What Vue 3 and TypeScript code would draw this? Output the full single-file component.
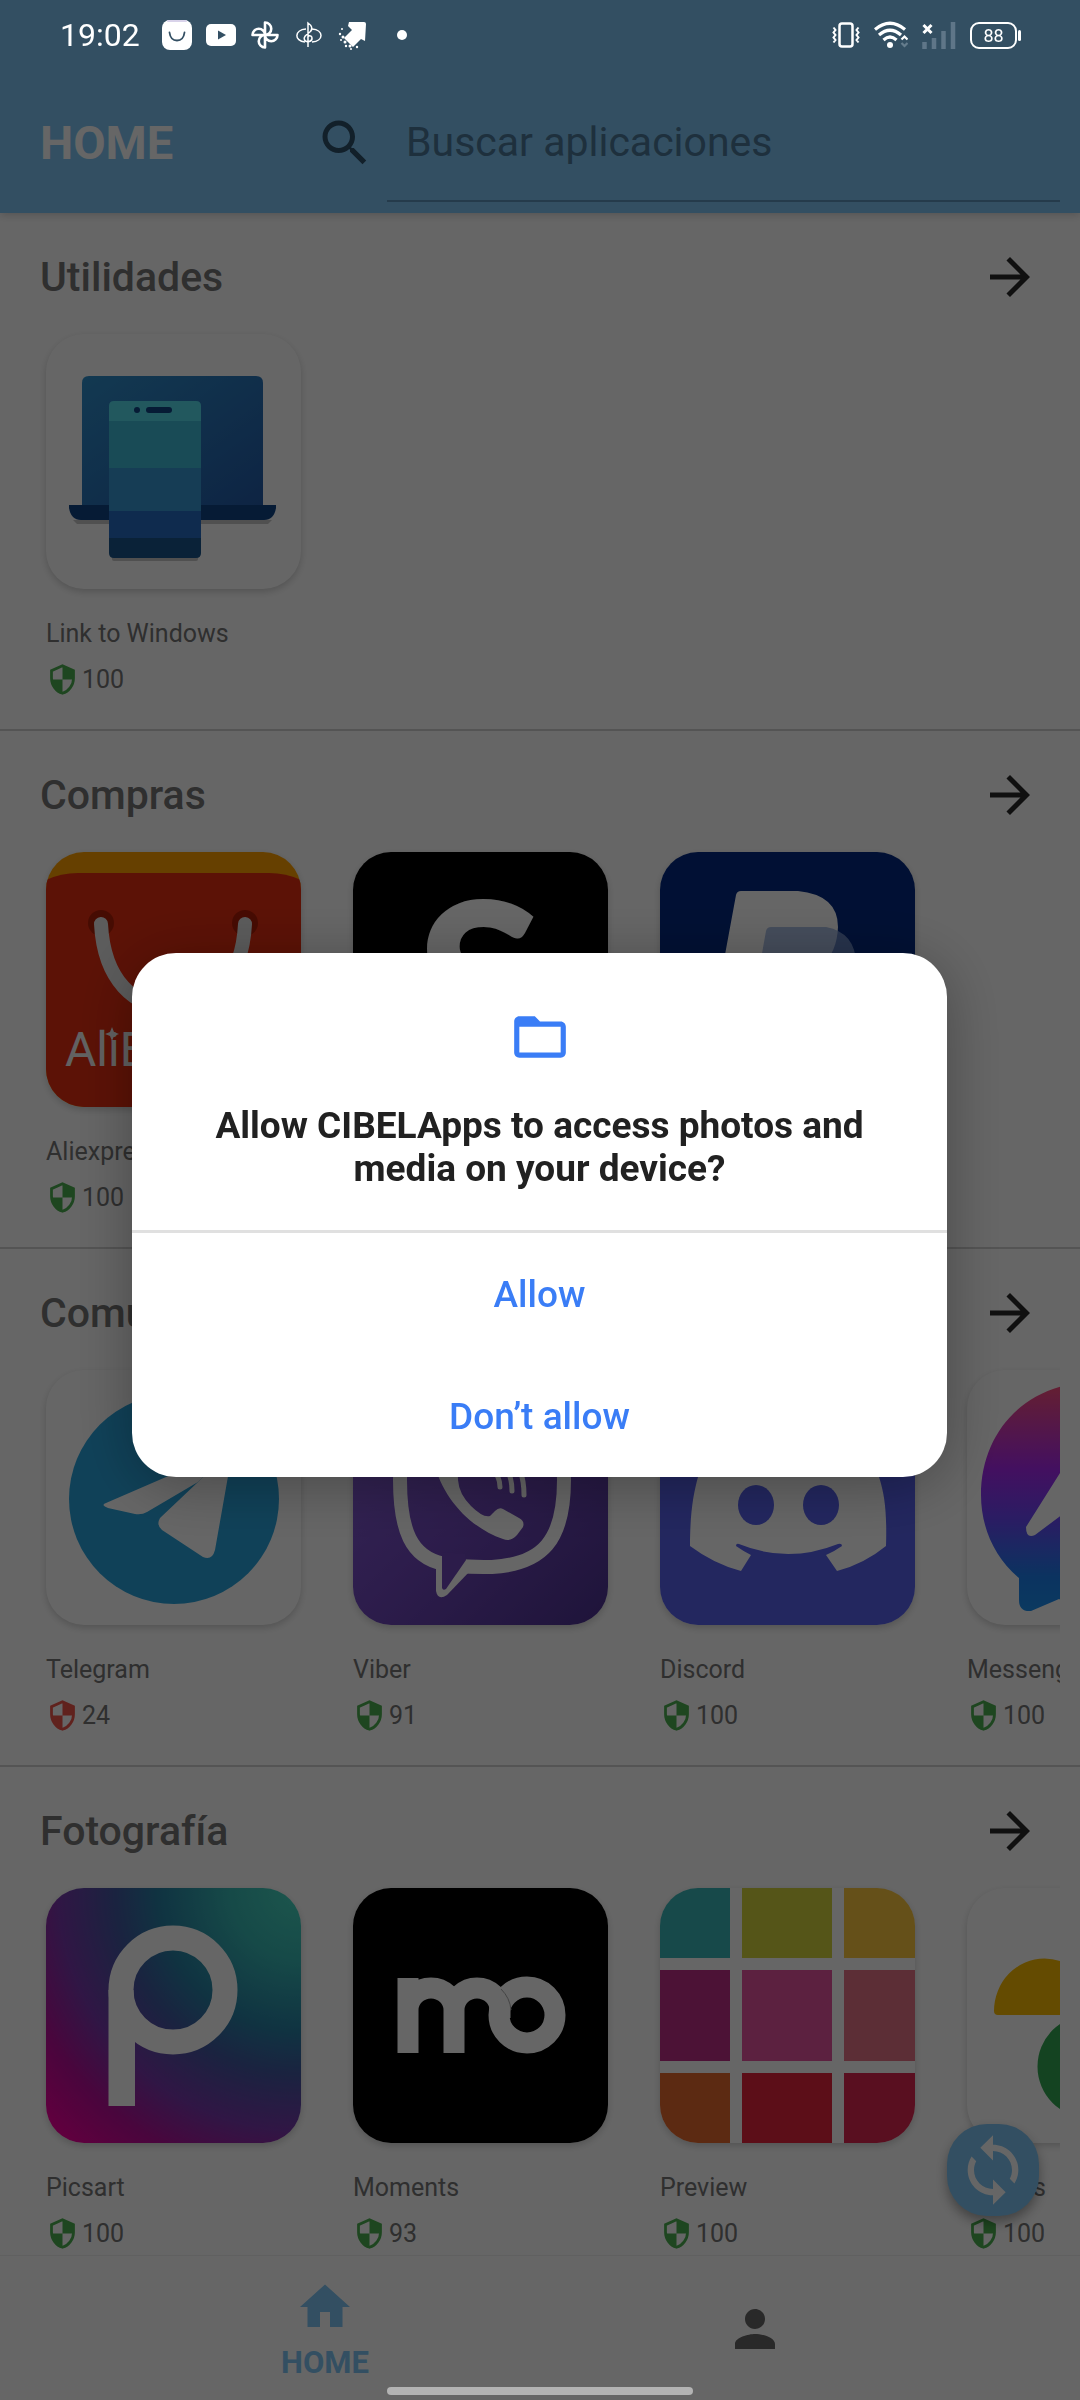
<script setup lang="ts">
import { ref } from 'vue'

type Art =
  | 'link' | 'ali' | 'shein' | 'paypal' | 'telegram' | 'viber'
  | 'discord' | 'messenger' | 'picsart' | 'moments' | 'preview' | 'photos'

interface StoreApp {
  art: Art
  name?: string
  score?: number
}

interface Section {
  title: string
  apps: StoreApp[]
}

const query = ref('')

const sections: Section[] = [
  { title: 'Utilidades', apps: [{ name: 'Link to Windows', score: 100, art: 'link' }] },
  {
    title: 'Compras',
    apps: [
      { name: 'Aliexpress', score: 100, art: 'ali' },
      { art: 'shein' },
      { art: 'paypal' },
    ],
  },
  {
    title: 'Comunicación',
    apps: [
      { name: 'Telegram', score: 24, art: 'telegram' },
      { name: 'Viber', score: 91, art: 'viber' },
      { name: 'Discord', score: 100, art: 'discord' },
      { name: 'Messenger', score: 100, art: 'messenger' },
    ],
  },
  {
    title: 'Fotografía',
    apps: [
      { name: 'Picsart', score: 100, art: 'picsart' },
      { name: 'Moments', score: 93, art: 'moments' },
      { name: 'Preview', score: 100, art: 'preview' },
      { name: 'Photos', score: 100, art: 'photos' },
    ],
  },
]

const tiles = [
  { x: 0, y: 0, w: 70, h: 70, c: '#3ab7b9' },
  { x: 82, y: 0, w: 90, h: 70, c: '#d5d53c' },
  { x: 184, y: 0, w: 71, h: 70, c: '#fcc840' },
  { x: 0, y: 82, w: 70, h: 91, c: '#be2d88' },
  { x: 82, y: 82, w: 90, h: 91, c: '#e653a0' },
  { x: 184, y: 82, w: 71, h: 91, c: '#e67387' },
  { x: 0, y: 185, w: 70, h: 70, c: '#e6692d' },
  { x: 82, y: 185, w: 90, h: 70, c: '#e6233c' },
  { x: 184, y: 185, w: 71, h: 70, c: '#de2650' },
]
</script>

<template>
  <div class="screen">
    <header class="toolbar">
      <h1 class="brand">HOME</h1>
      <label class="search-icon" for="search" aria-label="Buscar">
        <svg viewBox="0 0 24 24" width="60" height="60" fill="#2f5069">
          <path d="M15.5 14h-.79l-.28-.27C15.41 12.59 16 11.11 16 9.5 16 5.91 13.09 3 9.5 3S3 5.91 3 9.5 5.91 16 9.5 16c1.61 0 3.09-.59 4.23-1.57l.27.28v.79l5 4.99L20.49 19l-4.99-5zm-6 0C7.01 14 5 11.99 5 9.5S7.01 5 9.5 5 14 7.01 14 9.5 11.99 14 9.5 14z" />
        </svg>
      </label>
      <input id="search" v-model="query" class="search" type="text" placeholder="Buscar aplicaciones" />
    </header>

    <main class="content">
      <section v-for="s in sections" :key="s.title" class="section">
        <div class="section-head">
          <h2>{{ s.title }}</h2>
          <button type="button" class="more" :aria-label="'Ver más de ' + s.title">
            <svg viewBox="0 0 24 24" width="60" height="60" fill="#2a2a2a">
              <path d="M12 4l-1.41 1.41L16.17 11H4v2h12.17l-5.58 5.59L12 20l8-8z" />
            </svg>
          </button>
        </div>
        <ul class="apps">
          <li v-for="a in s.apps" :key="a.art" class="app">
            <div class="art">
              <svg viewBox="0 0 255 255" width="255" height="255">
                <g v-if="a.art === 'link'">
                  <defs>
                    <linearGradient id="lap" x1="0" y1="0" x2="1" y2="1">
                      <stop offset="0" stop-color="#2f8fcb" />
                      <stop offset="1" stop-color="#235aa8" />
                    </linearGradient>
                  </defs>
                  <path d="M27 186h199l-4 4H31z" fill="#c8c8c8" />
                  <rect x="66" y="222" width="86" height="5" rx="2" fill="#c8c8c8" />
                  <path d="M36 172V49q0-7 7-7h167q7 0 7 7v123z" fill="url(#lap)" />
                  <path d="M23 171h207v3q-2 12-12 12H35q-10 0-12-12z" fill="#0f4486" />
                  <path d="M63 87V72q0-5 5-5h82q5 0 5 5v15z" fill="#55dcec" />
                  <path d="M63 87h92v47H63z" fill="#40bcd6" />
                  <path d="M63 134h92v43H63z" fill="#379ad4" />
                  <path d="M63 177h92v27H63z" fill="#266cc4" />
                  <path d="M63 204h92v15q0 5-5 5H68q-5 0-5-5z" fill="#19558c" />
                  <circle cx="91" cy="76" r="3" fill="#0f4486" />
                  <rect x="100" y="73" width="26" height="6" rx="3" fill="#0f4486" />
                </g>
                <g v-else-if="a.art === 'ali'">
                  <path d="M0 0h255v255H0z" fill="#ffa000" />
                  <path d="M0 28Q15 21 32 21H223Q240 21 255 28V255H0z" fill="#e62e10" />
                  <circle cx="55" cy="71" r="13" fill="#b01e06" />
                  <circle cx="199" cy="71" r="13" fill="#b01e06" />
                  <path d="M55 72C58 128 88 156 127 156S196 128 199 72" fill="none" stroke="#e6e6e6" stroke-width="14" stroke-linecap="round" />
                  <text x="19" y="214" class="ali-text">AliExpress</text>
                  <path d="M66 175l2 5 5 2-5 2-2 5-2-5-5-2 5-2z" fill="#f4f4f4" />
                </g>
                <g v-else-if="a.art === 'shein'">
                  <path d="M0 0h255v255H0z" />
                  <text x="127" y="218" class="shein-text">S</text>
                </g>
                <g v-else-if="a.art === 'paypal'">
                  <path d="M0 0h255v255H0z" fill="#042a82" />
                  <path d="M76 43q1-4 5-4h57q40 4 40 36-2 50-60 54H96l-8 55H50z" fill="#fff" />
                  <path d="M106 79q1-4 5-4h55q32 6 30 42-8 42-62 46h-16l-7 50H82z" fill="#8aa5d8" opacity=".7" />
                </g>
                <g v-else-if="a.art === 'telegram'">
                  <circle cx="128" cy="129" r="105" fill="#2aa4dd" />
                  <path d="M60 133L187 78 152 112 101 142q-5 3-12 2L62 138q-8-3-2-5z" fill="#fff" />
                  <path d="M114 148L152 112 187 78 169 180q-3 11-12 7l-41-27q-6-5-2-12z" fill="#fff" />
                </g>
                <g v-else-if="a.art === 'viber'">
                  <defs>
                    <linearGradient id="vib" x1="0" y1="0" x2="1" y2="1">
                      <stop offset="0" stop-color="#8a62dc" />
                      <stop offset=".5" stop-color="#7048bc" />
                      <stop offset="1" stop-color="#4c3290" />
                    </linearGradient>
                  </defs>
                  <path d="M0 0h255v255H0z" fill="url(#vib)" />
                  <path d="M47 110C47 160 58 187 90 193.500 104 197 120 197 139 197 190 194 211 170 211 110 211 50 190 30 129 30S47 50 47 110z" fill="none" stroke="#fff" stroke-width="14" />
                  <path d="M83 190V221q2 10 11 4L118 200z" fill="#fff" />
                  <path d="M89 182V218q1 3 4 1L113 190 112 184z" fill="#6e46b8" />
                  <path d="M80 90C90 130 118 158 150 169q8 3 14-4l6-8q2-6-4-9l-16-9q-4-2-8 2l-5 5q-7 2-19-10T105 110L104 80z" fill="#fff" />
                  <path d="M138 98q9 8 9 19M142 86q17 12 17 35M146 74q25 16 25 51" fill="none" stroke="#fff" stroke-width="5" stroke-linecap="round" />
                </g>
                <g v-else-if="a.art === 'discord'">
                  <path d="M0 0h255v255H0z" fill="#5862ee" />
                  <path d="M38 107C33 125 30 145 30 176Q54 194 81 201L91 185Q83 181 76 176 76 173 79 174 128 194 178 174 182 173 182 176 175 181 166 185L177 201Q204 194 226 176C227 145 225 125 219 107 212 85 204 65 194 55L62 55C52 65 44 85 38 107z" fill="#fff" />
                  <ellipse cx="96" cy="135" rx="18" ry="20" fill="#5862ee" />
                  <ellipse cx="161" cy="135" rx="18" ry="20" fill="#5862ee" />
                </g>
                <g v-else-if="a.art === 'messenger'">
                  <defs>
                    <linearGradient id="msg" x1="0" y1="0" x2="0" y2="1">
                      <stop offset="0" stop-color="#ff5078" />
                      <stop offset=".38" stop-color="#a828f0" />
                      <stop offset=".6" stop-color="#6a48f8" />
                      <stop offset=".85" stop-color="#1c80f0" />
                      <stop offset="1" stop-color="#1c90f0" />
                    </linearGradient>
                  </defs>
                  <path d="M128 12C60 12 14 61 14 125 14 158 28 188 52 208V230Q52 242 64 241L92 229Q110 238 128 238C195 238 242 190 242 125S195 12 128 12z" fill="url(#msg)" />
                  <path d="M59 157L93 103q8-10 18-3l24 19 40-24q10-4 7 6L148 152q-8 10-18 3L104 138 68 165q-9 4-9-8z" fill="#fff" />
                </g>
                <g v-else-if="a.art === 'picsart'">
                  <defs>
                    <radialGradient id="pic" cx="1" cy="0" r="1.4">
                      <stop offset="0" stop-color="#48d8c0" />
                      <stop offset=".2" stop-color="#38b8b4" />
                      <stop offset=".4" stop-color="#2880a4" />
                      <stop offset=".52" stop-color="#4258a0" />
                      <stop offset=".68" stop-color="#7838ac" />
                      <stop offset=".82" stop-color="#b80e98" />
                      <stop offset=".96" stop-color="#f0009c" />
                    </radialGradient>
                  </defs>
                  <path d="M0 0h255v255H0z" fill="url(#pic)" />
                  <circle cx="127" cy="102" r="52" fill="none" stroke="#fff" stroke-width="25" />
                  <path d="M62.500 102h25l1.500 40v76H62.500z" fill="#fff" />
                </g>
                <g v-else-if="a.art === 'moments'">
                  <path d="M0 0h255v255H0z" />
                  <circle cx="174" cy="127" r="28" fill="none" stroke="#fff" stroke-width="21" />
                  <path d="M55 165V90M55 122A23 22 0 0 1 101 122V165M101 122A23 22 0 0 1 147 122V130" fill="none" stroke="#fff" stroke-width="21" />
                  <path d="M148 101Q157 110 158 122" fill="none" stroke="#aaa" stroke-width="1" />
                </g>
                <g v-else-if="a.art === 'preview'">
                  <rect v-for="t in tiles" :key="t.c" :x="t.x" :y="t.y" :width="t.w" :height="t.h" :fill="t.c" />
                </g>
                <g v-else>
                  <path d="M31 127q-4 0-4-4A50 52 0 0 1 128 123V127z" fill="#fbbc04" />
                  <path d="M127 228q0 4-5 2A50 50 0 0 1 122 127h5z" fill="#34a853" />
                  <path d="M224 130q4 0 4 4A50 52 0 0 1 128 134V130z" fill="#4285f4" />
                  <path d="M128 29q0-4 5-2A50 50 0 0 1 133 127h-5z" fill="#ea4335" />
                </g>
              </svg>
            </div>
            <p v-if="a.name" class="name">{{ a.name }}</p>
            <p v-if="a.score !== undefined" class="score">
              <svg viewBox="0 0 24 24" width="33" height="33" :class="a.score < 50 ? 'bad' : 'good'">
                <path d="M12 2L4 5.600V11c0 5 3.400 9.700 8 11 4.600-1.300 8-6 8-11V5.600z" fill="none" stroke="currentColor" stroke-width="2" />
                <path d="M12 2l8 3.600V12h-8zM12 12v10c-4.600-1.300-7.800-5.600-8-10z" fill="currentColor" />
              </svg>
              <span>{{ a.score }}</span>
            </p>
          </li>
        </ul>
      </section>
      <button type="button" class="fab" aria-label="Actualizar">
        <svg viewBox="0 0 24 24" width="76" height="76" fill="#fff">
          <path d="M12 4V1L8 5l4 4V6c3.310 0 6 2.690 6 6 0 1.010-.25 1.970-.7 2.800l1.460 1.460C19.540 15.030 20 13.570 20 12c0-4.420-3.580-8-8-8zm0 14c-3.310 0-6-2.690-6-6 0-1.010.25-1.970.7-2.800L5.240 7.740C4.460 8.970 4 10.430 4 12c0 4.420 3.580 8 8 8v3l4-4-4-4v3z" />
        </svg>
      </button>
    </main>

    <nav class="tabs">
      <a href="#home" class="tab active">
        <svg viewBox="0 0 24 24" width="60" height="60" fill="currentColor">
          <path d="M10 20v-6h4v6h5v-8h3L12 3 2 12h3v8z" />
        </svg>
        <span>HOME</span>
      </a>
      <a href="#profile" class="tab" aria-label="Perfil">
        <svg viewBox="0 0 24 24" width="60" height="60" fill="currentColor">
          <path d="M12 12c2.210 0 4-1.790 4-4s-1.790-4-4-4-4 1.790-4 4 1.790 4 4 4zm0 2c-2.670 0-8 1.340-8 4v2h16v-2c0-2.660-5.330-4-8-4z" />
        </svg>
      </a>
    </nav>
  </div>

  <div class="scrim">
    <div class="dialog" role="dialog" aria-modal="true" aria-labelledby="ask">
      <div class="ask">
        <svg viewBox="0 0 24 24" width="62" height="62" fill="#3a7df6">
          <path d="M20 6h-8l-2-2H4c-1.100 0-1.990.9-1.990 2L2 18c0 1.100.9 2 2 2h16c1.100 0 2-.9 2-2V8c0-1.100-.9-2-2-2zm0 12H4V8h16v10z" />
        </svg>
        <h2 id="ask">Allow CIBELApps to access photos and media on your device?</h2>
      </div>
      <button type="button" class="choice">Allow</button>
      <button type="button" class="choice">Don’t allow</button>
    </div>
  </div>

  <div class="status">
    <div class="status-left">
      <span class="time">19:02</span>
      <svg viewBox="0 0 30 30" width="30" height="30">
        <rect width="30" height="30" rx="8" fill="#fff" />
        <path d="M6 1h18" stroke="#d9d3ea" stroke-width="2" stroke-linecap="round" />
        <path d="M7.500 12.500q1 8 7.500 8t7.500-8" fill="none" stroke="#334f63" stroke-width="1.800" stroke-linecap="round" />
      </svg>
      <svg viewBox="0 0 30 30" width="30" height="30">
        <rect y="4" width="30" height="22" rx="5" fill="#fff" />
        <path d="M12 10.500v9l8-4.500z" fill="#334f63" />
      </svg>
      <svg viewBox="0 0 30 30" width="30" height="30" fill="none" stroke="#fff" stroke-width="2.600" stroke-linejoin="round">
        <path d="M15 15V2.500a6.200 6.200 0 0 1 0 12.500zM15 15h12.500a6.200 6.200 0 0 1-12.500 0zM15 15v12.500a6.200 6.200 0 0 1 0-12.500zM15 15H2.500a6.200 6.200 0 0 1 12.500 0z" />
      </svg>
      <svg viewBox="0 0 30 30" width="30" height="30" fill="none" stroke="#fff" stroke-width="1.500">
        <path d="M14 27V3q6 4 2.500 8.500C12 15 9 17 10.500 20c2 3 8 1.500 7.500-2s-5-2.500-4 .5" />
        <path d="M12 9C0 10 0 21 11 22M18 9C30 10 30 21 18 22" />
      </svg>
      <svg viewBox="0 0 30 30" width="30" height="30" fill="#fff">
        <path d="M11 2h15q2 0 2 2l-1 17-4-2-8 8-9-9 8-8-4-4z" />
        <g>
          <circle cx="4" cy="9" r="1" /><circle cx="2" cy="14" r="1.200" /><circle cx="5" cy="17" r="1.500" />
          <circle cx="3" cy="20" r="1" /><circle cx="7" cy="22" r="1.500" /><circle cx="8" cy="26" r="1.200" />
          <circle cx="12" cy="26" r="1.500" /><circle cx="13" cy="29" r="1" /><circle cx="19" cy="27" r="1.200" />
        </g>
      </svg>
      <svg class="dot" viewBox="0 0 10 10" width="10" height="10"><circle cx="5" cy="5" r="5" fill="#fff" /></svg>
    </div>
    <div class="status-right">
      <svg viewBox="0 0 28 26" width="28" height="26" fill="none" stroke="#fff">
        <rect x="7.500" y="1.500" width="13" height="23" rx="2.500" stroke-width="2.500" />
        <path d="M1.500 5.500l2 2.500-2 2.500 2 2.500-2 2.500 2 2.500-2 2.500M26.500 5.500l-2 2.500 2 2.500-2 2.500 2 2.500-2 2.500 2 2.500" stroke-width="2" />
      </svg>
      <svg viewBox="0 0 34 28" width="34" height="28" fill="none" stroke="#fff" stroke-width="3.200">
        <path d="M1 8.500Q16 -4 31 8.500M5 14Q16 4.500 27 14M9.500 19Q16 13 22.500 19" />
        <circle cx="16" cy="24" r="3" fill="#fff" stroke="none" />
        <path d="M27.500 18.500l3-3 3 3" stroke-width="2.200" />
        <path d="M27.500 22l3 3 3-3" stroke="#667d8d" stroke-width="2.200" />
      </svg>
      <svg viewBox="0 0 34 28" width="34" height="28">
        <path d="M2.500 28v-7M12 28V17M21.500 28V10M31 28V1" stroke="#5f7688" stroke-width="4.500" />
        <path d="M1.500 4l8 8M9.500 4l-8 8" stroke="#fff" stroke-width="3" />
      </svg>
      <div class="battery"><span>88</span></div>
    </div>
  </div>
  <div class="handle"></div>
</template>

<style>
body {
  background: #fff;
}
</style>

<style scoped>
.screen,
.scrim,
.status {
  font-family: Roboto, 'Liberation Sans', sans-serif;
}
.screen {
  height: 100vh;
  display: flex;
  flex-direction: column;
  overflow: hidden;
  background: #fff;
  color: #757575;
}
svg {
  display: block;
  flex: none;
}
h1,
h2,
p,
ul {
  margin: 0;
  padding: 0;
}
button {
  border: 0;
  padding: 0;
  background: none;
  font: inherit;
  cursor: pointer;
}
.toolbar {
  flex: none;
  display: flex;
  align-items: center;
  height: 141px;
  padding: 72px 20px 0 40px;
  background: #7fc6f5;
  box-shadow: 0 2px 8px rgba(0, 0, 0, 0.18);
  position: relative;
}
.brand {
  width: 275px;
  font-size: 47px;
  font-weight: 700;
  line-height: 56px;
  color: #fff;
}
.search-icon {
  margin-right: 12px;
}
.search {
  flex: 1;
  min-width: 0;
  align-self: stretch;
  margin: 0 0 11px;
  padding: 12px 20px 0 19px;
  border: 0;
  border-bottom: 2px solid #5d94bb;
  border-radius: 0;
  background: none;
  font: 400 41px Roboto, 'Liberation Sans', sans-serif;
  color: #2f5069;
  outline: none;
}
.search::placeholder {
  color: #4c7899;
  opacity: 1;
}
.content {
  flex: 1;
  min-height: 0;
  overflow: hidden;
  position: relative;
}
.section {
  padding: 34px 20px 33px;
  border-bottom: 2px solid #d2d2d2;
}
.section-head {
  display: flex;
  align-items: center;
  justify-content: space-between;
  padding: 0 20px;
  margin-bottom: 27px;
}
.section-head h2 {
  font-size: 41px;
  font-weight: 500;
  line-height: 60px;
}
.apps {
  display: flex;
  gap: 52px;
  min-height: 362px;
  padding-left: 26px;
  list-style: none;
  overflow-x: clip;
}
.app {
  flex: none;
  width: 255px;
}
.art {
  border-radius: 38px;
  overflow: hidden;
  background: #fff;
  box-shadow: 0 3px 7px rgba(0, 0, 0, 0.18);
}
.name {
  margin-top: 30px;
  font-size: 25px;
  line-height: 30px;
  white-space: nowrap;
}
.score {
  display: flex;
  align-items: center;
  gap: 3px;
  margin-top: 14px;
  font-size: 25px;
  line-height: 33px;
}
.good {
  color: #4caf50;
}
.bad {
  color: #f0554a;
}
.ali-text {
  font: 400 48px Roboto, sans-serif;
  fill: #f4f4f4;
}
.shein-text {
  font: 900 232px Lato, sans-serif;
  fill: #fff;
  text-anchor: middle;
}
.fab {
  position: absolute;
  right: 41px;
  bottom: 39px;
  width: 92px;
  height: 92px;
  display: grid;
  place-items: center;
  border-radius: 40px;
  background: #7fc6f5;
  box-shadow: 0 6px 12px rgba(0, 0, 0, 0.35);
}
.tabs {
  flex: none;
  display: flex;
  justify-content: center;
  height: 144px;
  border-top: 1px solid #efefef;
  background: #fff;
}
.tab {
  flex: 0 1 430px;
  display: flex;
  flex-direction: column;
  align-items: center;
  justify-content: center;
  gap: 8px;
  padding-top: 2px;
  color: #666;
  font-size: 31px;
  font-weight: 700;
  line-height: 36px;
  text-decoration: none;
}
.tab.active {
  color: #7fc6f5;
}
.scrim {
  position: fixed;
  inset: 0;
  display: grid;
  align-items: center;
  padding: 29px 133px 0 132px;
  background: rgba(0, 0, 0, 0.6);
}
.dialog {
  display: flex;
  flex-direction: column;
  overflow: hidden;
  border-radius: 44px;
  background: #fff;
  box-shadow: 0 8px 60px rgba(0, 0, 0, 0.3);
}
.ask {
  display: flex;
  flex-direction: column;
  align-items: center;
  gap: 36px;
  padding: 53px 72px 40px;
  border-bottom: 3px solid #e0e0e0;
}
.ask h2 {
  font-size: 37px;
  font-weight: 700;
  line-height: 43px;
  text-align: center;
  color: #212121;
}
.choice {
  height: 122px;
  padding-top: 2px;
  font-size: 37px;
  font-weight: 500;
  line-height: 44px;
  color: #3a7df6;
}
.status {
  position: fixed;
  top: 0;
  left: 0;
  right: 0;
  display: flex;
  justify-content: space-between;
  align-items: center;
  height: 70px;
  padding: 0 59px 0 60px;
  color: #fff;
}
.status-left,
.status-right {
  display: flex;
  align-items: center;
  gap: 14px;
}
.time {
  margin-right: 8px;
  font-size: 32px;
  line-height: 40px;
}
.dot {
  margin-left: 15px;
}
.battery {
  position: relative;
  box-sizing: border-box;
  width: 47px;
  height: 27px;
  margin-right: 4px;
  border: 2px solid #fff;
  border-radius: 9px;
  font-size: 18px;
  line-height: 23px;
  text-align: center;
}
.battery::after {
  content: '';
  position: absolute;
  right: -6px;
  top: 6px;
  width: 3px;
  height: 11px;
  border-radius: 2px;
  background: #fff;
}
.handle {
  position: fixed;
  left: 50%;
  bottom: 5px;
  width: 306px;
  height: 8px;
  margin-left: -153px;
  border-radius: 4px;
  background: #b3b3b3;
}
</style>
